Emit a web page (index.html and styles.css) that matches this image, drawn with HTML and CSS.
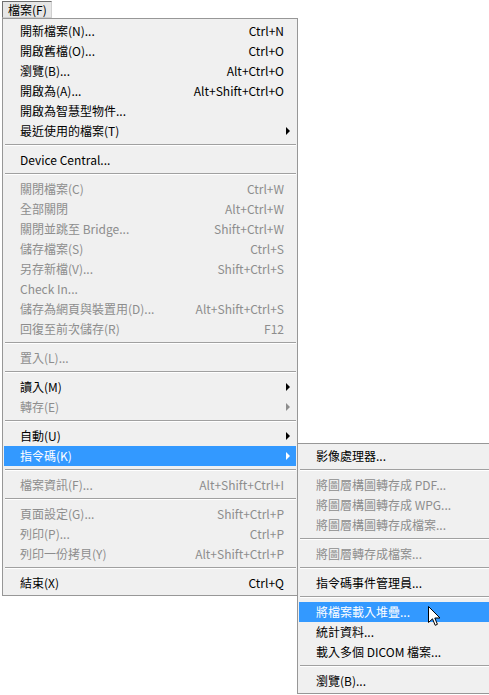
FILE: index.html
```html
<!DOCTYPE html>
<html lang="zh-Hant">
<head>
  <meta charset="UTF-8" />
  <title>檔案選單</title>
  <link rel="stylesheet" href="styles.css">
</head>
<body>
  <div class="menubar">
    <span class="menubar-item">檔案(F)</span>
  </div>

  <div class="menu main-menu">
    <div class="item"><span>開新檔案(N)...</span><span class="key">Ctrl+N</span></div>
    <div class="item"><span>開啟舊檔(O)...</span><span class="key">Ctrl+O</span></div>
    <div class="item"><span>瀏覽(B)...</span><span class="key">Alt+Ctrl+O</span></div>
    <div class="item"><span>開啟為(A)...</span><span class="key">Alt+Shift+Ctrl+O</span></div>
    <div class="item"><span>開啟為智慧型物件...</span></div>
    <div class="item sub"><span>最近使用的檔案(T)</span></div>
    <div class="sep"></div>
    <div class="item"><span>Device Central...</span></div>
    <div class="sep"></div>
    <div class="item off"><span>關閉檔案(C)</span><span class="key">Ctrl+W</span></div>
    <div class="item off"><span>全部關閉</span><span class="key">Alt+Ctrl+W</span></div>
    <div class="item off"><span>關閉並跳至 Bridge...</span><span class="key">Shift+Ctrl+W</span></div>
    <div class="item off"><span>儲存檔案(S)</span><span class="key">Ctrl+S</span></div>
    <div class="item off"><span>另存新檔(V)...</span><span class="key">Shift+Ctrl+S</span></div>
    <div class="item off"><span>Check In...</span></div>
    <div class="item off"><span>儲存為網頁與裝置用(D)...</span><span class="key">Alt+Shift+Ctrl+S</span></div>
    <div class="item off"><span>回復至前次儲存(R)</span><span class="key">F12</span></div>
    <div class="sep"></div>
    <div class="item off"><span>置入(L)...</span></div>
    <div class="sep"></div>
    <div class="item sub"><span>讀入(M)</span></div>
    <div class="item sub off"><span>轉存(E)</span></div>
    <div class="sep"></div>
    <div class="item sub"><span>自動(U)</span></div>
    <div class="item sub active"><span>指令碼(K)</span></div>
    <div class="sep"></div>
    <div class="item off"><span>檔案資訊(F)...</span><span class="key">Alt+Shift+Ctrl+I</span></div>
    <div class="sep"></div>
    <div class="item off"><span>頁面設定(G)...</span><span class="key">Shift+Ctrl+P</span></div>
    <div class="item off"><span>列印(P)...</span><span class="key">Ctrl+P</span></div>
    <div class="item off"><span>列印一份拷貝(Y)</span><span class="key">Alt+Shift+Ctrl+P</span></div>
    <div class="sep"></div>
    <div class="item"><span>結束(X)</span><span class="key">Ctrl+Q</span></div>
  </div>

  <div class="menu sub-menu">
    <div class="item"><span>影像處理器...</span></div>
    <div class="sep"></div>
    <div class="item off"><span>將圖層構圖轉存成 PDF...</span></div>
    <div class="item off"><span>將圖層構圖轉存成 WPG...</span></div>
    <div class="item off"><span>將圖層構圖轉存成檔案...</span></div>
    <div class="sep"></div>
    <div class="item off"><span>將圖層轉存成檔案...</span></div>
    <div class="sep"></div>
    <div class="item"><span>指令碼事件管理員...</span></div>
    <div class="sep"></div>
    <div class="item active"><span>將檔案載入堆疊...</span></div>
    <div class="item"><span>統計資料...</span></div>
    <div class="item"><span>載入多個 DICOM 檔案...</span></div>
    <div class="sep"></div>
    <div class="item"><span>瀏覽(B)...</span></div>
  </div>

  <svg class="cursor" width="13" height="21" viewBox="0 0 13 21">
    <path d="M0.5 0.5 L0.5 16.5 L4.5 12.8 L7.2 19.3 L9.4 18.3 L6.8 12 L12 12 Z" fill="#fff" stroke="#000" stroke-width="1" stroke-linejoin="miter" />
  </svg>
</body>
</html>
```

FILE: styles.css
```css
body {
  margin: 0;
  background: #fff;
  font-family: "Noto Sans CJK TC", "Liberation Sans", sans-serif;
  font-size: 12px;
  color: #000;
  width: 489px;
  height: 695px;
  overflow: hidden;
  position: relative;
}

.menubar {
  height: 18px;
  padding-left: 2px;
  display: flex;
}

.menubar-item {
  display: flex;
  align-items: center;
  padding: 0 4px 0 5px;
  margin-top: 1px;
  height: 15px;
  background: #e6e6e6;
  border-top: 1px solid #6f6f6f;
  border-left: 1px solid #6f6f6f;
  border-right: 1px solid #cfcfcf;
  border-bottom: 1px solid #cfcfcf;
  line-height: 15px;
}

.menu {
  background: #f0f0f0;
  border: 1px solid #979797;
  padding: 2px 0;
  box-sizing: border-box;
}

.main-menu {
  margin-left: 2px;
  width: 296px;
}

/* flyout for 指令碼(K) */
.sub-menu {
  position: absolute;
  left: 297px;
  top: 443px;
  width: 196px;
  border-right: none;
}

.item {
  height: 20px;
  display: flex;
  align-items: center;
  justify-content: space-between;
  padding: 0 12px 0 16px;
  margin: 0 1px;
  line-height: 20px;
  white-space: nowrap;
  position: relative;
}

.sub-menu .item {
  padding-left: 17px;
}

.item.off {
  color: #8d8d8d;
}

.item.active {
  background: #3399ff;
  color: #fff;
}

.item.sub::after {
  content: "";
  position: absolute;
  right: 6px;
  top: 6px;
  border-left: 4px solid #000;
  border-top: 4px solid transparent;
  border-bottom: 4px solid transparent;
}

.item.sub.off::after {
  border-left-color: #8d8d8d;
}

.item.sub.active::after {
  border-left-color: #fff;
}

.sep {
  height: 2px;
  margin: 3px 1px 4px 2px;
  border-top: 1px solid #a0a0a0;
  border-bottom: 1px solid #fff;
  box-sizing: border-box;
}

.cursor {
  position: absolute;
  left: 428px;
  top: 606px;
}
```
